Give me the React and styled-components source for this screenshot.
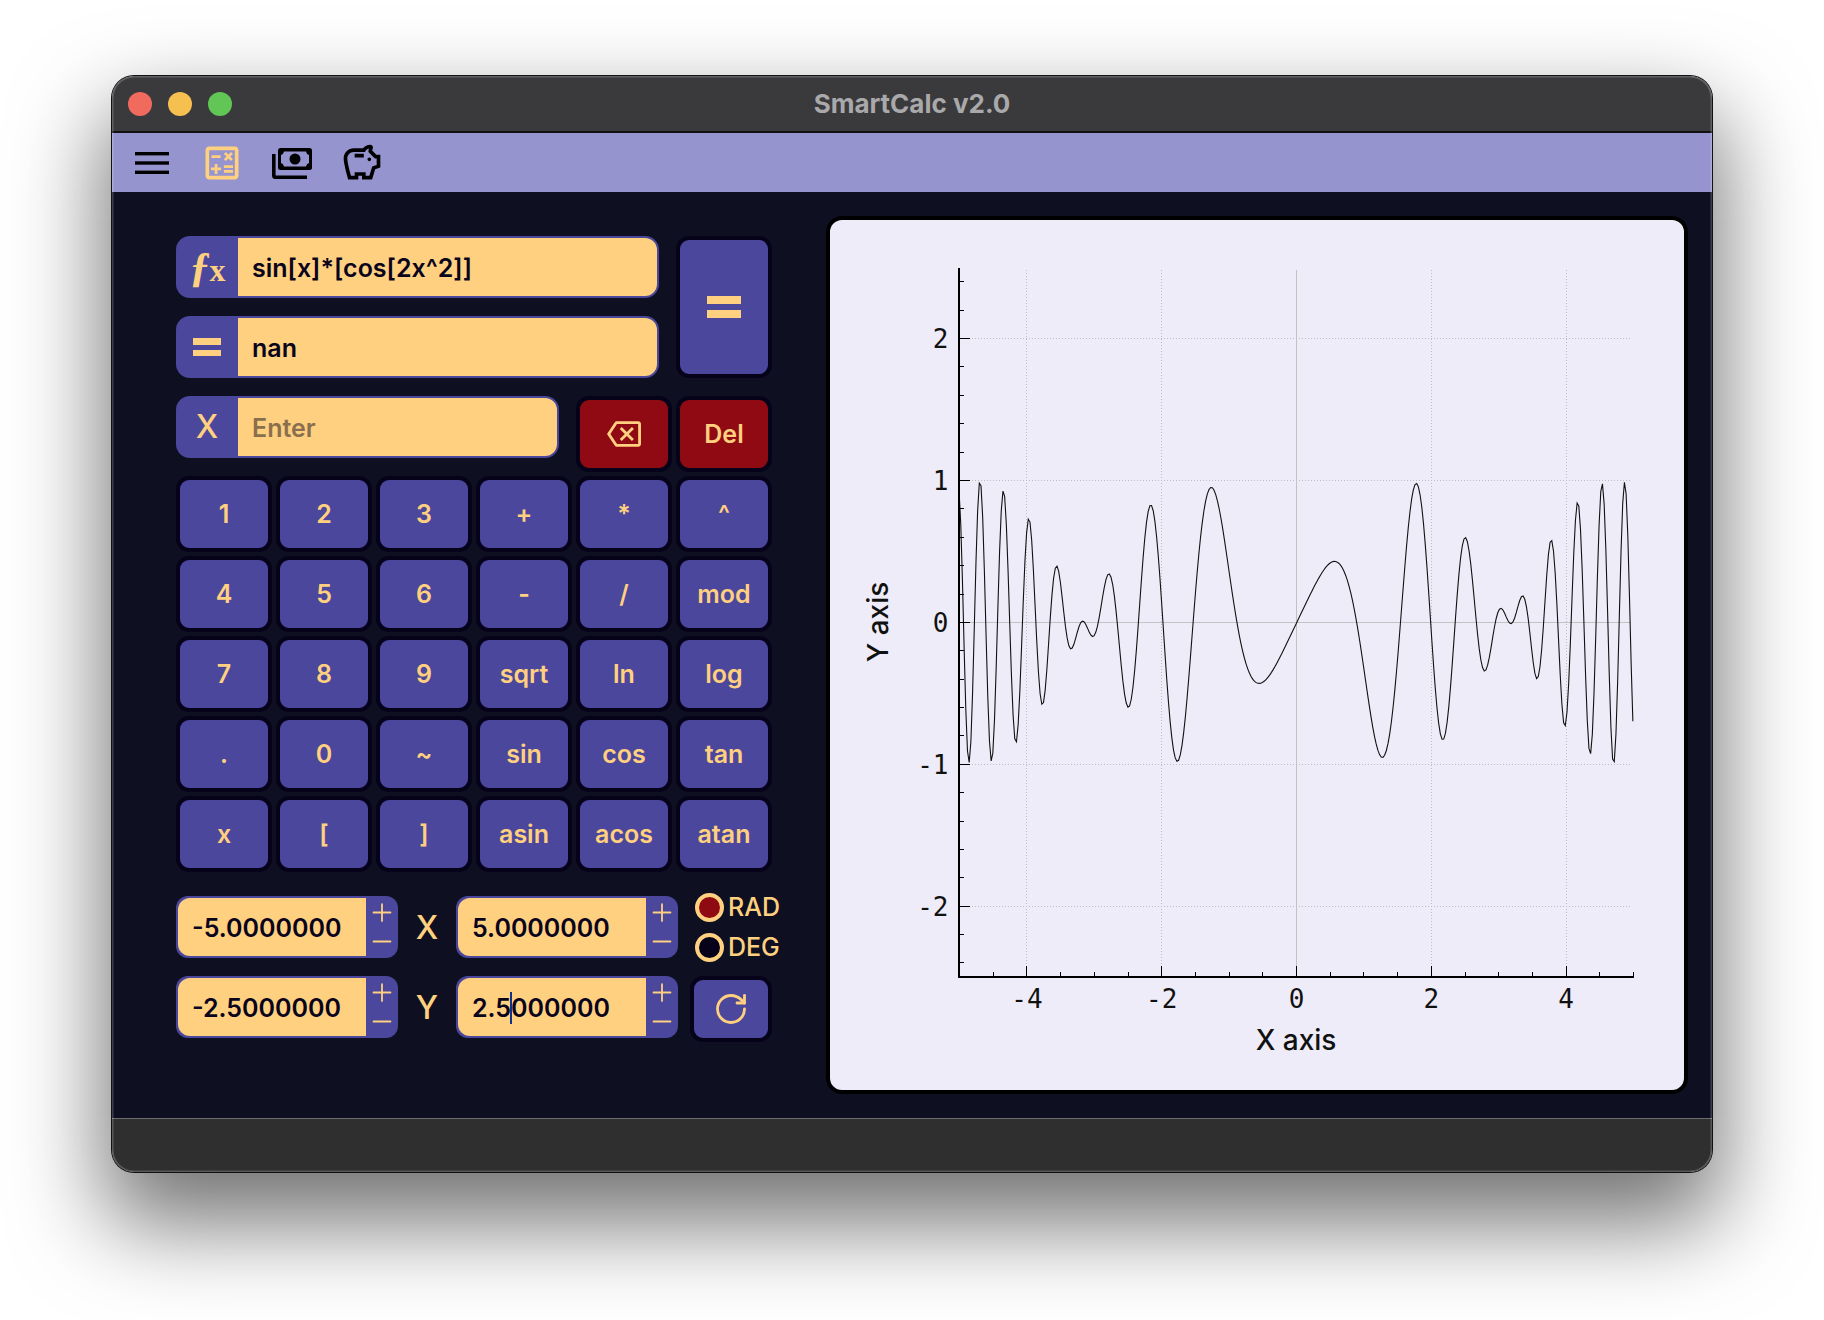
import React from 'react';
import styled, { createGlobalStyle } from 'styled-components';
import { MdOutlineCalculate, MdOutlineSavings, MdOutlineBackspace } from 'react-icons/md';
import { RotateCw, Plus, Minus } from 'lucide-react';

const yellow = '#ffd07f';
const purple = '#4b479d';
const ink = '#09041c';
const keyBorder = '#05021a';
const red = '#8f0a12';
const lilac = '#9594ce';

const GlobalStyle = createGlobalStyle`
  html, body { margin: 0; padding: 0; background: #fff; }
  * { box-sizing: border-box; }
`;

const Page = styled.div`
  width: 1824px;
  height: 1320px;
  padding: 76px 112px 0;
  overflow: hidden;
  font-family: Inter, "Noto Sans", sans-serif;
`;

const Window = styled.div`
  position: relative;
  width: 1600px;
  height: 1096px;
  display: flex;
  flex-direction: column;
  border-radius: 22px;
  overflow: hidden;
  box-shadow: 0 0 0 1px #111, 0 44px 90px 8px rgba(0, 0, 0, 0.55);

  &::after {
    content: '';
    position: absolute;
    inset: 0;
    border-radius: 22px;
    box-shadow: inset 0 0 0 1.5px rgba(255, 255, 255, 0.2);
    pointer-events: none;
  }
`;

const TitleBar = styled.div`
  height: 57px;
  flex: none;
  display: grid;
  grid-template-columns: 1fr auto 1fr;
  align-items: center;
  padding: 0 16px;
  background: #3a3a3c;
  border-bottom: 2px solid #111;
`;

const Lights = styled.div`
  display: flex;
  gap: 16px;
`;

const Light = styled.span`
  width: 24px;
  height: 24px;
  border-radius: 50%;
  background: ${(p) => p.color};
`;

const Title = styled.div`
  color: #a9a9ab;
  font-size: 26px;
  font-weight: 700;
`;

const ToolBar = styled.div`
  height: 59px;
  flex: none;
  display: flex;
  align-items: center;
  gap: 26px;
  padding-left: 18px;
  background: ${lilac};
  color: #000;
`;

const ToolIcon = styled.div`
  width: 44px;
  height: 44px;
  display: flex;
  align-items: center;
  justify-content: center;
  color: ${(p) => (p.$active ? yellow : '#000')};
`;

const Main = styled.div`
  height: 926px;
  flex: none;
  display: flex;
  justify-content: space-between;
  padding: 24px;
  background: #0e1022;
`;

const Calc = styled.div`
  width: 620px;
  margin-left: 40px;
  padding-top: 20px;
  display: flex;
  flex-direction: column;
`;

const TopBlock = styled.div`
  display: flex;
  gap: 17px;
  height: 160px;
`;

const FieldStack = styled.div`
  width: 483px;
  display: flex;
  flex-direction: column;
  gap: 18px;
`;

const Field = styled.div`
  width: ${(p) => p.$width || '483px'};
  height: 62px;
  display: flex;
  padding: 2px 2px 2px 0;
  background: ${purple};
  border-radius: 14px;
`;

const Addon = styled.div`
  width: 62px;
  flex: none;
  display: flex;
  align-items: center;
  justify-content: center;
  color: ${yellow};
  font-size: 32px;
  font-weight: 500;
  line-height: 1;
`;

const FxMark = styled.span`
  font-family: "Liberation Serif", serif;
  font-weight: 700;
  font-size: 32px;
  letter-spacing: -1px;
  i {
    font-size: 42px;
    font-style: italic;
  }
`;

const FieldValue = styled.div`
  flex: 1;
  display: flex;
  align-items: center;
  padding: 2px 0 0 14px;
  background: ${yellow};
  border-radius: 0 12px 12px 0;
  color: ${(p) => (p.$placeholder ? '#8a6f4e' : ink)};
  font-size: 25px;
  font-weight: 600;
`;

const Bars = styled.div`
  width: ${(p) => p.$w}px;
  display: flex;
  flex-direction: column;
  gap: ${(p) => p.$gap}px;
  span {
    height: ${(p) => p.$h}px;
    background: ${yellow};
  }
`;

const Key = styled.button`
  width: 96px;
  height: 76px;
  padding: 0;
  display: flex;
  align-items: center;
  justify-content: center;
  border: 4px solid ${keyBorder};
  border-radius: 13px;
  background: ${(p) => (p.$danger ? red : purple)};
  color: ${yellow};
  font-family: inherit;
  font-size: 25px;
  font-weight: 600;
`;

const EqualKey = styled(Key)`
  height: 142px;
`;

const ReloadKey = styled(Key)`
  width: 82px;
  height: 66px;
  margin-left: 12px;
`;

const EditRow = styled.div`
  display: flex;
  height: 80px;
  gap: 4px;
`;

const EnterField = styled(Field)`
  margin-right: 13px;
`;

const Keypad = styled.div`
  display: grid;
  grid-template-columns: repeat(6, 96px);
  grid-auto-rows: 76px;
  gap: 4px;
`;

const RangeRows = styled.div`
  margin-top: 24px;
  display: flex;
  flex-direction: column;
  gap: 18px;
`;

const RangeRow = styled.div`
  height: 62px;
  display: flex;
  align-items: flex-start;
`;

const Spin = styled.div`
  width: 222px;
  height: 62px;
  flex: none;
  display: flex;
  padding: 2px 0 2px 2px;
  background: ${purple};
  border-radius: 12px;
`;

const SpinValue = styled.div`
  flex: 1;
  display: flex;
  align-items: center;
  padding: 2px 0 0 14px;
  background: ${yellow};
  border-radius: 12px 0 0 12px;
  color: ${ink};
  font-size: 25px;
  font-weight: 600;
  white-space: pre;
`;

const Caret = styled.span`
  width: 2px;
  height: 32px;
  margin: 0 -1px;
  background: #12308a;
`;

const Stepper = styled.div`
  width: 32px;
  flex: none;
  display: flex;
  flex-direction: column;
  align-items: center;
  color: ${yellow};
  svg { flex: 1; }
`;

const AxisName = styled.div`
  width: 58px;
  height: 62px;
  flex: none;
  display: flex;
  align-items: center;
  justify-content: center;
  color: ${yellow};
  font-size: 32px;
  font-weight: 500;
`;

const Radios = styled.div`
  height: 62px;
  margin-left: 17px;
  display: flex;
  flex-direction: column;
  justify-content: center;
  gap: 12px;
`;

const Radio = styled.div`
  display: flex;
  align-items: center;
  gap: 4px;
  height: 28px;
  color: ${yellow};
  font-size: 25px;
  font-weight: 500;
`;

const RadioDot = styled.span`
  width: 29px;
  height: 29px;
  border-radius: 50%;
  border: 4px solid ${yellow};
  background: ${(p) => (p.$on ? red : keyBorder)};
`;

const PlotPanel = styled.div`
  width: 862px;
  height: 878px;
  border: 4px solid #000;
  border-radius: 16px;
  background: #eeecf8;
  overflow: hidden;
  svg { display: block; }
`;

const StatusBar = styled.div`
  flex: 1;
  background: #2f2f2f;
  border-top: 1px solid #6d6d6d;
`;

const KEYS = ['1', '2', '3', '+', '*', '^', '4', '5', '6', '-', '/', 'mod', '7', '8', '9', 'sqrt', 'ln', 'log',
  '.', '0', '~', 'sin', 'cos', 'tan', 'x', '[', ']', 'asin', 'acos', 'atan'];

// plot coordinates inside the panel
const px = (v) => 466.5 + v * 67.4;
const py = (v) => 402.4 - v * 141.9;
const left = 128.5;
const bottom = 756.5;
const right = 804;
const top = 48;

// the app samples 400 points across the x range
function curve() {
  const pts = [];
  for (let i = 0; i < 400; i++) {
    const x = -5 + i * 0.025;
    const y = Math.sin(x) * Math.cos(2 * x * x);
    pts.push(`${(466.8 + x * 67.55).toFixed(2)},${py(y).toFixed(2)}`);
  }
  return pts.join(' ');
}

function range(from, to, step) {
  const out = [];
  for (let i = 0; from + i * step <= to + 1e-6; i++) out.push(+(from + i * step).toFixed(2));
  return out;
}

const tickFont = { fontFamily: '"DejaVu Sans Mono", monospace', fontSize: 26, fill: '#111' };
const nameFont = { fontFamily: 'Inter, sans-serif', fontSize: 28, fontWeight: 500, fill: '#111' };

function Plot() {
  const gx = [-4, -2, 2, 4];
  const gy = [-2, -1, 1, 2];
  return (
    <svg width="854" height="870" viewBox="0 0 854 870">
      <g shapeRendering="crispEdges">
        {gx.map((v) => (
          <line key={v} x1={px(v)} x2={px(v)} y1={top + 2} y2={bottom - 10} stroke="#bcbcc4" strokeWidth="1" strokeDasharray="1 2" />
        ))}
        {gy.map((v) => (
          <line key={v} x1={left + 10} x2={right - 3} y1={py(v)} y2={py(v)} stroke="#bcbcc4" strokeWidth="1" strokeDasharray="1 2" />
        ))}
        <line x1={px(0)} x2={px(0)} y1={top + 2} y2={bottom - 10} stroke="#c2c2c4" strokeWidth="1" />
        <line x1={left + 10} x2={right - 3} y1={py(0)} y2={py(0)} stroke="#c2c2c4" strokeWidth="1" />
      </g>

      <polyline points={curve()} fill="none" stroke="#111" strokeWidth="1.1" />

      <g shapeRendering="crispEdges">
        <line x1={left} x2={left} y1={top} y2={bottom + 1} stroke="#000" strokeWidth="2" />
        <line x1={left} x2={right} y1={bottom} y2={bottom} stroke="#000" strokeWidth="2" />
        {range(-2.4, 2.4, 0.2).map((v) => {
          const major = Number.isInteger(v);
          return <line key={v} x1={left} x2={left + (major ? 11 : 5)} y1={py(v)} y2={py(v)} stroke="#000" strokeWidth="1" />;
        })}
        {range(-4.5, 5, 0.5).map((v) => {
          const major = v % 2 === 0;
          return <line key={v} x1={px(v)} x2={px(v)} y1={bottom} y2={bottom - (major ? 11 : 5)} stroke="#000" strokeWidth="1" />;
        })}
      </g>

      {[-2, -1, 0, 1, 2].map((v) => (
        <text key={v} x={left - 10} y={py(v) + 9.5} textAnchor="end" style={tickFont}>
          {String(v)}
        </text>
      ))}
      {[-4, -2, 0, 2, 4].map((v) => (
        <text key={v} x={px(v)} y={bottom + 31} textAnchor="middle" style={tickFont}>
          {String(v)}
        </text>
      ))}
      <text x={466} y={830} textAnchor="middle" style={nameFont}>X axis</text>
      <text x={0} y={0} transform="translate(58 402) rotate(-90)" textAnchor="middle" style={nameFont}>Y axis</text>
    </svg>
  );
}

function MenuGlyph() {
  return (
    <svg width="34" height="24" viewBox="0 0 34 24">
      <rect x="0" y="1" width="34" height="3.4" fill="#000" />
      <rect x="0" y="10.3" width="34" height="3.4" fill="#000" />
      <rect x="0" y="19.6" width="34" height="3.4" fill="#000" />
    </svg>
  );
}

function MoneyGlyph() {
  return (
    <svg width="44" height="44" viewBox="0 0 44 44">
      <rect x="8" y="7" width="34" height="22" rx="2.5" fill="#000" />
      <path d="M14 10.5 H36 Q36.5 13.5 39 14 V22 Q36.5 22.5 36 25.5 H14 Q13.5 22.5 11 22 V14 Q13.5 13.5 14 10.5 Z" fill={lilac} />
      <circle cx="25" cy="18" r="5.5" fill="#000" />
      <path d="M3.8 13 V34.5 Q3.8 36.2 5.5 36.2 H37" fill="none" stroke="#000" strokeWidth="3.6" />
    </svg>
  );
}

function EqualBars({ w, h, gap }) {
  return (
    <Bars $w={w} $h={h} $gap={gap}>
      <span />
      <span />
    </Bars>
  );
}

function SpinBox({ children }) {
  return (
    <Spin>
      <SpinValue>{children}</SpinValue>
      <Stepper>
        <Plus size={30} strokeWidth={1.5} />
        <Minus size={30} strokeWidth={1.5} />
      </Stepper>
    </Spin>
  );
}

export default function App() {
  return (
    <Page>
      <GlobalStyle />
      <Window>
        <TitleBar>
          <Lights>
            <Light color="#f16a5e" />
            <Light color="#f5c04f" />
            <Light color="#61c655" />
          </Lights>
          <Title>SmartCalc v2.0</Title>
        </TitleBar>

        <ToolBar>
          <ToolIcon><MenuGlyph /></ToolIcon>
          <ToolIcon $active><MdOutlineCalculate size={44} /></ToolIcon>
          <ToolIcon><MoneyGlyph /></ToolIcon>
          <ToolIcon><MdOutlineSavings size={44} /></ToolIcon>
        </ToolBar>

        <Main>
          <Calc>
            <TopBlock>
              <FieldStack>
                <Field>
                  <Addon><FxMark><i>ƒ</i>x</FxMark></Addon>
                  <FieldValue>sin[x]*[cos[2x^2]]</FieldValue>
                </Field>
                <Field>
                  <Addon><EqualBars w={28} h={6.5} gap={5} /></Addon>
                  <FieldValue>nan</FieldValue>
                </Field>
              </FieldStack>
              <EqualKey><EqualBars w={34} h={8} gap={6} /></EqualKey>
            </TopBlock>

            <EditRow>
              <EnterField $width="383px">
                <Addon>X</Addon>
                <FieldValue $placeholder>Enter</FieldValue>
              </EnterField>
              <Key $danger><MdOutlineBackspace size={34} /></Key>
              <Key $danger>Del</Key>
            </EditRow>

            <Keypad>
              {KEYS.map((k) => (
                <Key key={k}>{k}</Key>
              ))}
            </Keypad>

            <RangeRows>
              <RangeRow>
                <SpinBox>-5.0000000</SpinBox>
                <AxisName>X</AxisName>
                <SpinBox>5.0000000</SpinBox>
                <Radios>
                  <Radio><RadioDot $on />RAD</Radio>
                  <Radio><RadioDot />DEG</Radio>
                </Radios>
              </RangeRow>
              <RangeRow>
                <SpinBox>-2.5000000</SpinBox>
                <AxisName>Y</AxisName>
                <SpinBox>2.5<Caret />000000</SpinBox>
                <ReloadKey><RotateCw size={36} strokeWidth={1.9} /></ReloadKey>
              </RangeRow>
            </RangeRows>
          </Calc>

          <PlotPanel>
            <Plot />
          </PlotPanel>
        </Main>

        <StatusBar />
      </Window>
    </Page>
  );
}
